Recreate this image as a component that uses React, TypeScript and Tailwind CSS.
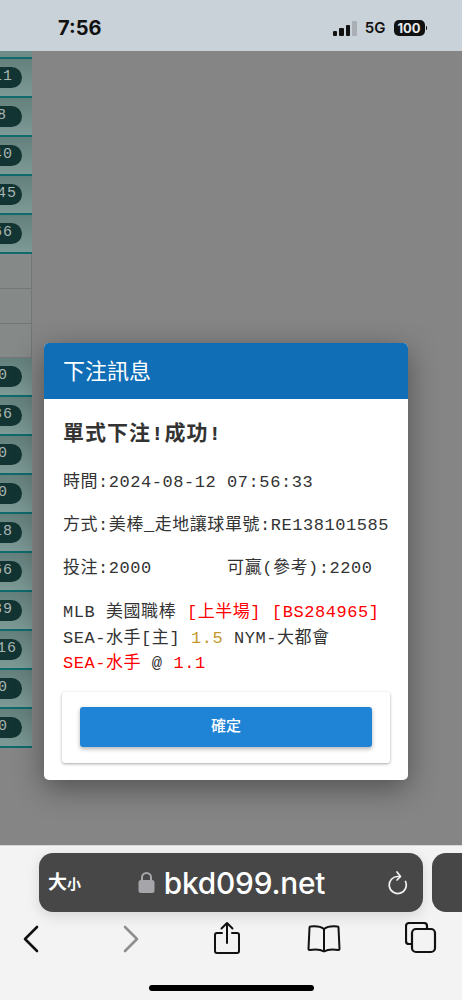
const SANS = "font-['Roboto','Noto_Sans_CJK_TC',sans-serif]";
const MONO = "font-['Liberation_Mono','Noto_Sans_CJK_TC',monospace]";

// table is scrolled off to the left, so numbers get clipped by the page edge
const TOP_ROWS = [
  { value: '11', pad: 'pr-[9px]' },
  { value: '8', pad: 'pr-[15px]' },
  { value: '40', pad: 'pr-[9px]' },
  { value: '45', pad: 'pr-[5px]' },
  { value: '66', pad: 'pr-[9px]' },
];
const BOTTOM_ROWS = [
  { value: '0', pad: 'pr-[14px]' },
  { value: '36', pad: 'pr-[9px]' },
  { value: '0', pad: 'pr-[14px]' },
  { value: '0', pad: 'pr-[14px]' },
  { value: '18', pad: 'pr-[9px]' },
  { value: '66', pad: 'pr-[9px]' },
  { value: '89', pad: 'pr-[9px]' },
  { value: '116', pad: 'pr-[5px]' },
  { value: '0', pad: 'pr-[14px]' },
  { value: '0', pad: 'pr-[14px]' },
];

function ScoreRow({ value, pad }: { value: string; pad: string }) {
  return (
    <div className="flex h-[39px] items-center justify-end border-b-2 border-[#0f6a6c] bg-gradient-to-b from-[#64807c] to-[#7d9a96] pr-[10px]">
      <span className={`flex h-[21px] w-[34px] shrink-0 items-center justify-end rounded-full bg-[#123433] text-[15px] tracking-[1px] text-[#a9b5b3] font-['Liberation_Mono',monospace] ${pad}`}>
        {value}
      </span>
    </div>
  );
}

function SideStrip() {
  return (
    <div className="w-[32px] shrink-0 overflow-hidden">
      <div className="h-[8px] border-b-2 border-[#0f6a6c] bg-[#6f8c88]" />
      {TOP_ROWS.map((r, i) => (
        <ScoreRow key={i} value={r.value} pad={r.pad} />
      ))}
      <div className="h-[35px] border-b border-r border-[#757575] bg-[#858a88]" />
      <div className="h-[35px] border-b border-r border-[#757575] bg-[#858a88]" />
      <div className="h-[34px] border-b border-r border-[#757575] bg-[#858a88]" />
      {BOTTOM_ROWS.map((r, i) => (
        <ScoreRow key={i} value={r.value} pad={r.pad} />
      ))}
    </div>
  );
}

function Modal() {
  return (
    <div className="absolute left-[44px] top-[343px] w-[364px] overflow-hidden rounded-[5px] bg-white shadow-[0_8px_30px_rgba(0,0,0,0.4)]">
      <div className={`h-[56px] bg-[#106eb6] pl-[19px] pt-[14px] text-[22px] leading-[30px] text-white ${SANS}`}>
        下注訊息
      </div>
      <div className={`px-[19px] pt-[22px] text-[#333] ${MONO}`}>
        <h4 className="text-[21px] leading-[28px] font-semibold tracking-[1px] text-[#333]">單式下注!成功!</h4>
        <div className="text-[17px] leading-[24px] tracking-[0.55px] whitespace-pre">
          <p className="mt-[22px]">時間:2024-08-12 07:56:33</p>
          <p className="mt-[19px]">方式:美棒_走地讓球單號:RE138101585</p>
          <p className="mt-[19px]">投注:2000       可贏(參考):2200</p>
        </div>
        <div className="mt-[19px] text-[17px] leading-[25.5px] tracking-[0.55px] whitespace-pre">
          <div>
            MLB 美國職棒 <span className="text-[#ff0000]">[上半場] [BS284965]</span>
          </div>
          <div>
            SEA-水手[主] <span className="text-[#c49a2c]">1.5</span> NYM-大都會
          </div>
          <div>
            <span className="text-[#ff0000]">SEA-水手</span> @ <span className="text-[#ff0000]">1.1</span>
          </div>
        </div>
      </div>
      <div className="mx-[18px] mb-[17px] mt-[15px] rounded-[3px] bg-white px-[18px] pb-[16px] pt-[15px] shadow-[0_1px_3px_rgba(0,0,0,0.35)]">
        <button className={`block h-[40px] w-full rounded-[3px] bg-[#1f83d6] text-[15px] font-medium text-white shadow-[0_2px_4px_rgba(0,0,0,0.3)] ${SANS}`}>
          確定
        </button>
      </div>
    </div>
  );
}

function StatusBar() {
  return (
    <div className="flex h-[51px] shrink-0 items-center justify-between bg-[#c9d1d9] pl-[58px] pr-[35px] pt-[5px]">
      <span className="text-[20px] font-bold text-[#111] font-['Inter',sans-serif]">7:56</span>
      <div className="flex items-center gap-[8px]">
        <div className="flex items-end gap-[2px]">
          <span className="h-[5px] w-[4.5px] rounded-[1px] bg-[#111]" />
          <span className="h-[8px] w-[4.5px] rounded-[1px] bg-[#111]" />
          <span className="h-[11px] w-[4.5px] rounded-[1px] bg-[#111]" />
          <span className="h-[15px] w-[4.5px] rounded-[1px] bg-[#a9afb5]" />
        </div>
        <span className="text-[15px] font-semibold text-[#111] font-['Inter',sans-serif]">5G</span>
        <div className="flex items-center gap-[1px]">
          <span className="h-[16px] w-[31px] rounded-[5px] bg-[#111] text-center text-[13px] font-bold leading-[16px] text-[#e8ebee] font-['Inter',sans-serif]">
            100
          </span>
          <span className="h-[4px] w-[1.5px] rounded-r-[1px] bg-[#111]" />
        </div>
      </div>
    </div>
  );
}

function BottomBar() {
  return (
    <div className="relative h-[155px] shrink-0 overflow-hidden border-t border-[#d8d8d8] bg-[#f3f3f3]">
      <div className="flex gap-[9px] pl-[39px] pt-[7px]">
        <div className="relative flex h-[59px] w-[384px] shrink-0 items-center rounded-[14px] bg-[#474747] shadow-[0_4px_14px_rgba(0,0,0,0.12)]">
          <span className={`absolute left-[9px] top-[19px] text-[19px] font-bold leading-[22px] text-white ${SANS}`}>
            大<span className="text-[14px]">小</span>
          </span>
          <div className="flex w-full items-center justify-center pl-[10px]">
            <svg width="17" height="23" viewBox="0 0 17 23" className="ml-[-9px] mr-[9px]">
              <path d="M4 10V6.500a4.500 4.500 0 0 1 9 0V10" fill="none" stroke="#a5a5aa" strokeWidth="2" />
              <rect x="0.5" y="9" width="16" height="13" rx="2.500" fill="#a5a5aa" />
            </svg>
            <span className="text-[29.8px] leading-[36px] font-medium tracking-[-0.2px] text-white font-['Inter',sans-serif]">bkd099.net</span>
          </div>
          <svg width="22" height="24" viewBox="0 0 22 24" fill="none" stroke="#f2f2f2" strokeWidth="1.700" strokeLinecap="round" strokeLinejoin="round" className="absolute right-[13px] top-[18px]">
            <path d="M17.500 10.500a8.500 8.500 0 1 1-7.500-5h2" />
            <path d="M9 1l3.500 4.500L9 9" />
          </svg>
        </div>
        <div className="h-[59px] w-[60px] shrink-0 rounded-[14px] bg-[#474747]" />
      </div>
      <div className="relative mt-[6px] h-[50px]">
        <svg width="18" height="28" viewBox="0 0 18 28" fill="none" stroke="#111" strokeWidth="2.600" strokeLinecap="round" strokeLinejoin="round" className="absolute left-[22px] top-[7px]">
          <path d="M15 2 3 14l12 12" />
        </svg>
        <svg width="18" height="28" viewBox="0 0 18 28" fill="none" stroke="#8e8e8e" strokeWidth="2.600" strokeLinecap="round" strokeLinejoin="round" className="absolute left-[122px] top-[7px]">
          <path d="m3 2 12 12L3 26" />
        </svg>
        <svg width="28" height="34" viewBox="0 0 28 34" fill="none" stroke="#111" strokeWidth="2" strokeLinecap="round" strokeLinejoin="round" className="absolute left-[213px] top-[3px]">
          <path d="M9 12H4a2 2 0 0 0-2 2v16a2 2 0 0 0 2 2h20a2 2 0 0 0 2-2V14a2 2 0 0 0-2-2h-5" />
          <path d="M14 22V2M8.500 7.500 14 2l5.500 5.500" />
        </svg>
        <svg width="34" height="30" viewBox="0 0 34 30" fill="none" stroke="#111" strokeWidth="2" strokeLinecap="round" strokeLinejoin="round" className="absolute left-[307px] top-[6px]">
          <path d="M17 5C14 2.500 9 2 3.500 2.500 3 2.500 2.500 3 2.500 3.500L1.500 25c0 .6.400 1 1 1C8 25 13 25 17 27.500 21 25 26 25 31.500 26c.6 0 1-.4 1-1L31.500 3.500c0-.5-.5-1-1-1C25 2 20 2.500 17 5Z" />
          <path d="M17 5v22" />
        </svg>
        <svg width="32" height="32" viewBox="0 0 32 32" fill="none" stroke="#111" strokeWidth="2.200" strokeLinejoin="round" className="absolute left-[405px] top-[4px]">
          <path d="M6 22H4a3 3 0 0 1-3-3V4a3 3 0 0 1 3-3h15a3 3 0 0 1 3 3v3" />
          <rect x="7" y="7" width="23" height="23" rx="4" />
        </svg>
      </div>
      <div className="absolute bottom-[9px] left-[149px] h-[6px] w-[165px] rounded-full bg-black" />
    </div>
  );
}

export default function App() {
  return (
    <div className="flex h-[1000px] w-[462px] flex-col overflow-hidden">
      <StatusBar />
      <div className="flex h-[794px] shrink-0 bg-[#858585]">
        <SideStrip />
      </div>
      <BottomBar />
      <Modal />
    </div>
  );
}
